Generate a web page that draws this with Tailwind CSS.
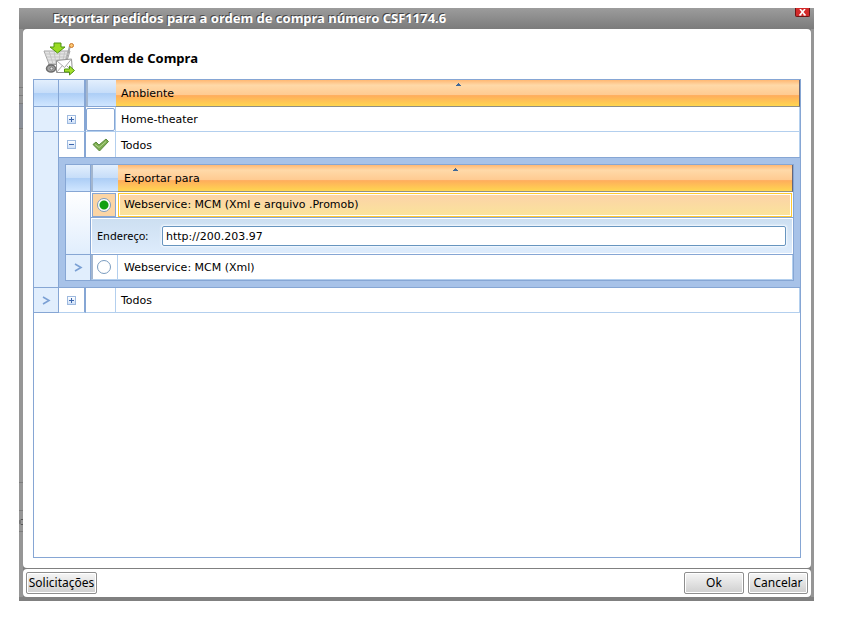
<!DOCTYPE html>
<html lang="pt-BR">
<head>
  <meta charset="UTF-8" />
  <title>Exportar pedidos</title>
  <meta name="viewport" content="width=device-width, initial-scale=1.0" />
  <script src="https://cdn.jsdelivr.net/npm/@tailwindcss/browser@4"></script>
</head>

<body class="flex h-screen bg-white pt-2 pr-[38px] pb-[19px] pl-[19px] font-['DejaVu_Sans',sans-serif] text-[11px] leading-4 text-black">

  <!-- Window -->
  <div class="flex flex-1 flex-col bg-[#808080]">

    <!-- Title bar -->
    <header class="flex h-[21px] items-start justify-between bg-linear-to-b from-[#9c9c9c] to-[#7c7c7c] pr-1 pl-[34px]">
      <h1 class="font-['Noto_Sans',sans-serif] text-[13px] leading-5 font-bold text-white [text-shadow:-1px_-1px_0_#444]">Exportar pedidos para a ordem de compra número CSF1174.6</h1>
      <button aria-label="Fechar" class="flex h-[9px] w-[15px] items-center justify-center rounded-b-xs border border-t-0 border-[#6e1414] bg-[#d32a2a]">
        <svg class="h-[7px] w-[7px]" viewBox="0 0 7 7" fill="none" stroke="#fff" stroke-width="1.6">
          <path d="M1 0l5 6M6 0L1 6" />
          <path d="M0 6h2.500M4.500 6H7" stroke-width="1" />
        </svg>
      </button>
    </header>

    <div class="flex flex-1">
      <!-- Left frame -->
      <div class="w-1 bg-[#969696]">
        <svg class="h-full w-1" fill="none" stroke="#7d7d7d" aria-hidden="true">
          <path d="M0 58.500h4M0 66.500h4M0 74.500h4M0 99.500h4M0 453.500h4M0 481.500h4M0 502.500h4" />
          <path d="M0 75h4v24H0z" fill="#8b8f97" stroke="none" />
          <path d="M4 490.500H2l-1 1v3l1 1h2" stroke="#555" />
        </svg>
      </div>

      <div class="flex flex-1 flex-col">
        <main class="flex flex-1 flex-col rounded-sm bg-white pt-[13px] pr-[10px] pb-[10px] pl-[10px]">

          <div class="flex h-[37px] items-start gap-1 pl-[10px]">
            <!-- Cart icon -->
            <svg class="h-[34px] w-[33px]" viewBox="0 0 33 34" fill="none">
              <path d="M1 9l5 13h17l4-13z" fill="#e4e4e4" stroke="#a5a5a5" />
              <path d="M22 22l5-18" stroke="#a5a5a5" stroke-width="2" />
              <path d="M2 12h24M4 15h21M5 18h19M6 9l4 13M11 9l2 13M17 9l-1 13M22 9l-3 13" stroke="#c4c4c4" />
              <path d="M5 22.500h20" stroke="#999" />
              <circle cx="28.500" cy="3.500" r="2" fill="#fbc873" stroke="#cc762a" />
              <ellipse cx="8" cy="26.500" rx="4.500" ry="3.500" fill="#a5a5a5" stroke="#6c6c6c" stroke-width="1.500" />
              <circle cx="8.500" cy="26.500" r="1.500" fill="#e8e8e8" stroke="#777" />
              <path d="M11 1h7v4h4l-7.500 6L7 5h4z" fill="#9bdc22" stroke="#4f9411" />
              <path d="M13.500 18.500l15-1.500 1 13.500h-16z" fill="#fff" stroke="#929292" />
              <path d="M13.500 18.500l8 7 7-8.500M13.500 30.500l6-7M29.500 29.500l-6-6" stroke="#aaa" />
              <path d="M21.500 27h5v-3l5 4.500-5 4.500v-3h-5z" fill="#a5e02d" stroke="#4f9411" />
            </svg>
            <h2 class="pt-2 font-['Noto_Sans',sans-serif] text-[13px] leading-4 font-bold">Ordem de Compra</h2>
          </div>

          <!-- Grid -->
          <div class="flex-1 border border-[#86a6d4] bg-white">
            <table class="w-full table-fixed border-separate border-spacing-0 text-left">
              <colgroup>
                <col class="w-[25px]" />
                <col class="w-[27px]" />
                <col class="w-[30px]" />
                <col />
              </colgroup>
              <thead>
                <tr class="h-[27px]">
                  <th class="border-r border-b border-[#86a6d4] bg-[linear-gradient(#e3effd,#c6ddf9_50%,#adcef6_52%,#d0e6ff)] p-0"></th>
                  <th class="border-r-2 border-b border-[#86a6d4] bg-[linear-gradient(#e3effd,#c6ddf9_50%,#adcef6_52%,#d0e6ff)] p-0"></th>
                  <th class="border-b border-l-2 border-b-[#86a6d4] border-l-[#a3b6cf] bg-[linear-gradient(#e3effd,#c6ddf9_50%,#adcef6_52%,#d0e6ff)] p-0"></th>
                  <th class="relative border-r border-b border-r-[#667] border-b-[#8f8f86] bg-[linear-gradient(#ffb873,#ffd9a8_20%,#ffcb92_56%,#ffad5c_60%,#ffd650)] p-0 font-normal">
                    <button class="block w-full px-[5px] pt-0.5 text-left">Ambiente</button>
                    <svg class="absolute top-[3px] left-1/2 -ml-0.5 h-[3px] w-[5px]" viewBox="0 0 5 3" fill="#3f6898"><path d="M2 0h1v1h1v1h1v1H0V2h1V1h1z" /></svg>
                  </th>
                </tr>
              </thead>
              <tbody>
                <tr class="h-[25px]">
                  <td class="border-r border-b border-[#86a6d4] bg-[#e1eefd] p-0"></td>
                  <td class="border-r-2 border-b border-r-[#86a6d4] border-b-[#b3cfee] p-0">
                    <button aria-label="Expandir Home-theater" class="mx-auto flex h-[9px] w-[9px] items-center justify-center border border-[#9db9df] bg-linear-to-b from-white to-[#cfe0f7]">
                      <svg class="h-[5px] w-[5px]" viewBox="0 0 5 5" stroke="#3c66ad"><path d="M0 2.500h5M2.500 0v5" /></svg>
                    </button>
                  </td>
                  <td class="border-r border-b border-[#b3cfee] p-0">
                    <input type="checkbox" aria-label="Home-theater" class="block h-[23px] w-full appearance-none rounded-xs border border-[#86a6d4] bg-white" />
                  </td>
                  <td class="border-r border-b border-[#b3cfee] px-[5px] pt-0.5 pb-0">Home-theater</td>
                </tr>
                <tr class="h-[25px]">
                  <td rowspan="2" class="border-r border-b border-[#86a6d4] bg-[#e1eefd] p-0"></td>
                  <td class="border-r-2 border-[#86a6d4] p-0">
                    <button aria-label="Recolher Todos" class="mx-auto flex h-[9px] w-[9px] items-center justify-center border border-[#9db9df] bg-linear-to-b from-white to-[#cfe0f7]">
                      <svg class="h-[5px] w-[5px]" viewBox="0 0 5 5" stroke="#3c66ad"><path d="M0 2.500h5" /></svg>
                    </button>
                  </td>
                  <td class="border-r border-[#b3cfee] p-0">
                    <label class="relative flex h-6 items-center justify-center">
                      <input type="checkbox" checked aria-label="Todos" class="absolute inset-0 appearance-none" />
                      <svg class="h-[14px] w-[17px]" viewBox="0 0 17 14"><path d="M1 6.500L4 4l3 3 7-6 2.500 2.500L7.500 13z" fill="#7cac50" stroke="#5a8a3c" stroke-linejoin="round" /><path d="M3 6.500L7 9.500l7-6" fill="none" stroke="#b3d48e" /></svg>
                    </label>
                  </td>
                  <td class="border-r border-[#b3cfee] px-[5px] pt-0.5 pb-0">Todos</td>
                </tr>
                <tr>
                  <!-- Nested grid -->
                  <td colspan="3" class="border-y border-[#86a6d4] bg-[#a7c2e8] p-[6px]">
                    <div class="border border-[#86a6d4] bg-white">
                      <table class="w-full table-fixed border-separate border-spacing-0 text-left">
                        <colgroup>
                          <col class="w-[25px]" />
                          <col class="w-[27px]" />
                          <col />
                        </colgroup>
                        <thead>
                          <tr class="h-[27px]">
                            <th class="border-r border-b border-[#86a6d4] bg-[linear-gradient(#e3effd,#c6ddf9_50%,#adcef6_52%,#d0e6ff)] p-0"></th>
                            <th class="border-b border-l-2 border-b-[#86a6d4] border-l-[#a3b6cf] bg-[linear-gradient(#e3effd,#c6ddf9_50%,#adcef6_52%,#d0e6ff)] p-0"></th>
                            <th class="relative border-r border-b border-r-[#667] border-b-[#8f8f86] bg-[linear-gradient(#ffb873,#ffd9a8_20%,#ffcb92_56%,#ffad5c_60%,#ffd650)] p-0 font-normal">
                              <button class="block w-full px-[6px] pt-0.5 text-left">Exportar para</button>
                              <svg class="absolute top-[3px] left-1/2 -ml-0.5 h-[3px] w-[5px]" viewBox="0 0 5 3" fill="#3f6898"><path d="M2 0h1v1h1v1h1v1H0V2h1V1h1z" /></svg>
                            </th>
                          </tr>
                        </thead>
                        <tbody>
                          <tr class="h-[26px]">
                            <td rowspan="2" class="border-r border-b border-[#86a6d4] bg-linear-to-b from-white to-[#e1eefd] p-0"></td>
                            <td class="border-b border-[#86a6d4] py-0 pr-0.5 pl-px">
                              <label class="flex h-6 items-center justify-center border border-[#86a6d4] bg-[#fbd5a5]">
                                <input type="radio" name="destino" checked aria-label="Webservice: MCM (Xml e arquivo .Promob)" class="h-[14px] w-[14px] appearance-none rounded-full border border-[#7a9cc0] bg-[radial-gradient(#12a012_4px,#fff_5px)]" />
                              </label>
                            </td>
                            <td class="border-b border-b-[#86a6d4] py-0 pr-px pl-0">
                              <div class="flex h-6 items-center border border-[#ffc92e] bg-linear-to-b from-[#fcd2a8] to-[#fae49a] px-[5px] ring-1 ring-white ring-inset">Webservice: MCM (Xml e arquivo .Promob)</div>
                            </td>
                          </tr>
                          <tr class="h-[37px]">
                            <td colspan="2" class="border-b border-b-[#86a6d4] p-px">
                              <div class="flex h-[34px] items-center bg-linear-to-b from-[#cddff1] to-[#deecfc] pr-[6px] pl-[5px]">
                                <label for="endereco" class="w-[65px] font-['Noto_Sans',sans-serif]">Endereço:</label>
                                <input id="endereco" type="text" value="http://200.203.97" class="h-5 min-w-0 flex-1 rounded-xs border border-[#6795bf] bg-white px-[3px] shadow-[0_0_2px_1px_#f4f9ff]" />
                              </div>
                            </td>
                          </tr>
                          <tr class="h-[25px]">
                            <td class="border-r border-[#86a6d4] bg-[#e1eefd] p-0">
                              <svg class="mx-auto h-[9px] w-[9px]" viewBox="0 0 9 9" fill="none" stroke="#7ba0d4" stroke-width="1.600"><path d="M1 1l6 3.500L1 8" /></svg>
                            </td>
                            <td class="border-r border-b border-l-2 border-r-[#b3cfee] border-b-[#b3cfee] border-l-[#a3b6cf] py-0 pr-0.5 pl-0">
                              <label class="flex h-[23px] items-center justify-center">
                                <input type="radio" name="destino" aria-label="Webservice: MCM (Xml)" class="h-[14px] w-[14px] appearance-none rounded-full border border-[#7a9cc0] bg-white" />
                              </label>
                            </td>
                            <td class="border-r border-b border-[#b3cfee] px-[6px] pt-0.5 pb-0">Webservice: MCM (Xml)</td>
                          </tr>
                        </tbody>
                      </table>
                    </div>
                  </td>
                </tr>
                <tr class="h-[25px]">
                  <td class="border-r border-b border-[#86a6d4] bg-[#e1eefd] p-0">
                    <svg class="mx-auto h-[9px] w-[9px]" viewBox="0 0 9 9" fill="none" stroke="#7ba0d4" stroke-width="1.600"><path d="M1 1l6 3.500L1 8" /></svg>
                  </td>
                  <td class="border-r-2 border-b border-r-[#86a6d4] border-b-[#b3cfee] p-0">
                    <button aria-label="Expandir Todos" class="mx-auto flex h-[9px] w-[9px] items-center justify-center border border-[#9db9df] bg-linear-to-b from-white to-[#cfe0f7]">
                      <svg class="h-[5px] w-[5px]" viewBox="0 0 5 5" stroke="#3c66ad"><path d="M0 2.500h5M2.500 0v5" /></svg>
                    </button>
                  </td>
                  <td class="border-r border-b border-[#b3cfee] p-0"></td>
                  <td class="border-r border-b border-[#b3cfee] px-[5px] pt-0.5 pb-0">Todos</td>
                </tr>
              </tbody>
            </table>
          </div>
        </main>

        <!-- Footer -->
        <footer class="mt-px flex h-7 items-center gap-1 rounded-sm bg-white px-[3px] font-['Noto_Sans',sans-serif] text-[12px]">
          <button class="mr-auto h-[22px] w-[71px] rounded-xs border border-[#8e8e8e] bg-linear-to-b from-[#f6f6f6] to-[#cfcfcf] ring-1 ring-white ring-inset">Solicitações</button>
          <button class="h-[22px] w-[60px] rounded-xs border border-[#8e8e8e] bg-linear-to-b from-[#f6f6f6] to-[#cfcfcf] ring-1 ring-white ring-inset">Ok</button>
          <button class="h-[22px] w-[60px] rounded-xs border border-[#8e8e8e] bg-linear-to-b from-[#f6f6f6] to-[#cfcfcf] ring-1 ring-white ring-inset">Cancelar</button>
        </footer>
      </div>

      <!-- Right frame -->
      <div class="w-[3px] bg-[#969696]"></div>
    </div>
    <div class="h-1"></div>
  </div>
</body>
</html>
